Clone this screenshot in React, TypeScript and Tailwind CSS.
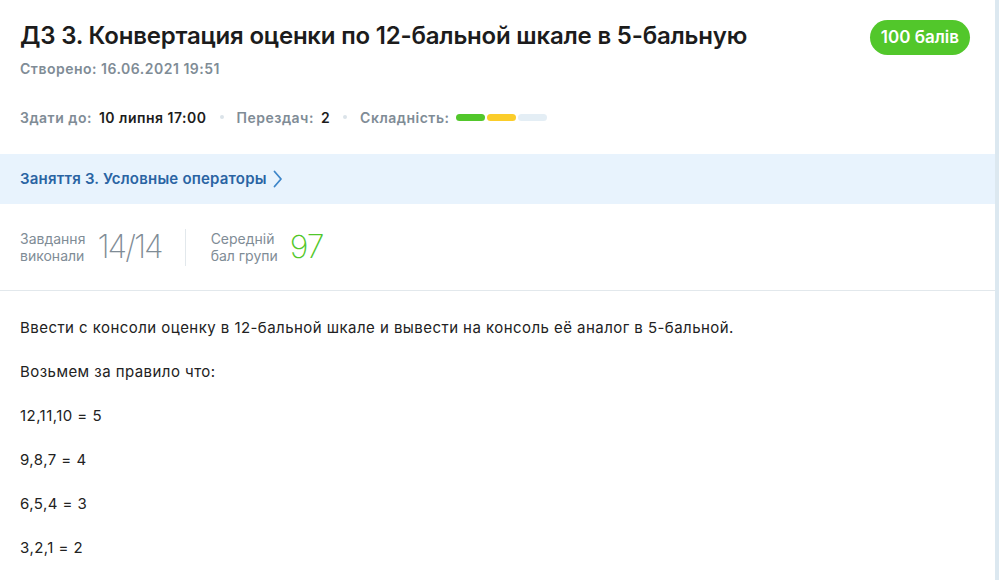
const Bars = () => (
  <div className="flex items-center gap-[2px] ml-[7px]">
    <span className="block w-[29px] h-[7px] rounded-full bg-[#52c72b]" />
    <span className="block w-[29px] h-[7px] rounded-full bg-[#fbcd2a]" />
    <span className="block w-[29px] h-[7px] rounded-full bg-[#e4eef5]" />
  </div>
);

const Dot = () => <span className="block w-[4px] h-[4px] rounded-full bg-[#dbe3e9] mx-[13px]" />;

export default function App() {
  const rules = ["12,11,10 = 5", "9,8,7 = 4", "6,5,4 = 3", "3,2,1 = 2"];

  return (
    <div
      className="w-[999px] h-[580px] overflow-hidden bg-white flex"
      style={{ fontFamily: "Inter, 'Open Sans', sans-serif" }}
    >
      <div className="w-[995px] flex flex-col">
        {/* header */}
        <div className="flex justify-between pl-[20px] pr-[25px] pt-[20px]">
          <div>
            <h1 className="text-[24px] leading-[32px] font-semibold text-[#1c1c1c] tracking-[-0.2px]">
              ДЗ 3. Конвертация оценки по 12-бальной шкале в 5-бальную
            </h1>
            <div className="mt-[7px] text-[14px] leading-[20px] font-semibold text-[#7f8c96] tracking-[0.5px]">
              Створено: 16.06.2021 19:51
            </div>
          </div>
          <div className="h-[35px] px-[11px] rounded-full bg-[#52c72b] text-white text-[17px] font-semibold flex items-center">
            100 балів
          </div>
        </div>

        <div className="flex items-center pl-[20px] mt-[28px] text-[14px] font-semibold h-[20px] tracking-[0.5px]">
          <span className="text-[#7f8c96]">Здати до:</span>
          <span className="ml-[7px] text-[#1c1c1c]">10 липня 17:00</span>
          <Dot />
          <span className="text-[#7f8c96]">Перездач:</span>
          <span className="ml-[7px] text-[#1c1c1c]">2</span>
          <Dot />
          <span className="text-[#7f8c96]">Складність:</span>
          <Bars />
        </div>

        {/* lesson link */}
        <div className="mt-[27px] h-[50px] bg-[#e8f3fd] flex items-center pl-[20px]">
          <span className="text-[15px] font-semibold text-[#2a64a3] tracking-[0.2px]">Заняття 3. Условные операторы</span>
          <svg width="10" height="18" viewBox="0 0 10 18" className="ml-[6px]">
            <path d="M1.5 1.5 L8 9 L1.5 16.5" fill="none" stroke="#3e86c9" strokeWidth="1.8" strokeLinecap="round" strokeLinejoin="round" />
          </svg>
        </div>

        {/* stats */}
        <div className="h-[87px] flex items-center pl-[20px] border-b border-[#e2e8ec]">
          <div className="flex items-center">
            <div className="text-[14px] leading-[17px] text-[#7f8c96]">
              Завдання
              <br />
              виконали
            </div>
            <div className="ml-[12px] text-[32px] font-extralight text-[#7f8c96] tracking-[-2px]">14/14</div>
          </div>
          <div className="w-px h-[37px] bg-[#e2e8ec] ml-[23px] mr-[25px]" />
          <div className="flex items-center">
            <div className="text-[14px] leading-[17px] text-[#7f8c96]">
              Середній
              <br />
              бал групи
            </div>
            <div className="ml-[12px] text-[32px] font-extralight text-[#52c72b] tracking-[-1px]">97</div>
          </div>
        </div>

        {/* description */}
        <div className="pl-[20px] pt-[27px] text-[15px] leading-[20px] text-[#222222] tracking-[0.45px] flex flex-col gap-[24px]">
          <p>Ввести с консоли оценку в 12-бальной шкале и вывести на консоль её аналог в 5-бальной.</p>
          <p>Возьмем за правило что:</p>
          {rules.map((r) => (
            <p key={r}>{r}</p>
          ))}
        </div>
      </div>
      <div className="w-[4px] bg-[#dce8f0]" />
    </div>
  );
}
